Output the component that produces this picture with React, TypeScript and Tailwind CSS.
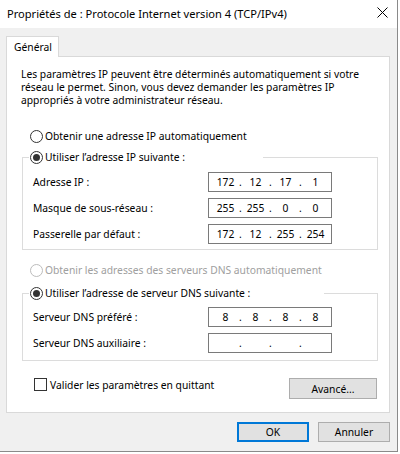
import type { ReactNode } from 'react';

type IpValue = [string, string, string, string];

function Radio({ checked, disabled }: { checked?: boolean; disabled?: boolean }) {
  return (
    <span
      className={`w-[13px] h-[13px] shrink-0 rounded-full border bg-white flex items-center justify-center ${
        disabled ? 'border-[#bcbcbc]' : 'border-[#333333]'
      }`}
    >
      {checked && <span className="w-[7px] h-[7px] rounded-full bg-[#333333]" />}
    </span>
  );
}

function RadioLine({ checked, disabled, children }: { checked?: boolean; disabled?: boolean; children: ReactNode }) {
  return (
    <div className={`h-[16px] flex items-center gap-[2px] ${disabled ? 'text-[#a0a0a0]' : ''}`}>
      <Radio checked={checked} disabled={disabled} />
      <span className="whitespace-nowrap">{children}</span>
    </div>
  );
}

function IpBox({ value }: { value: IpValue }) {
  return (
    <div className="w-[124px] h-[20px] border border-[#7a7a7a] bg-white flex items-center pl-[3px]">
      {value.map((part, i) => (
        <div key={i} className="flex items-center">
          {i > 0 && <span className="w-[3px] text-center">.</span>}
          <span className="w-[27px] text-center">{part}</span>
        </div>
      ))}
    </div>
  );
}

function Row({ label, value }: { label: string; value: IpValue }) {
  return (
    <div className="h-[20px] flex items-center">
      <span className="w-[175px]">{label}</span>
      <IpBox value={value} />
    </div>
  );
}

function Group({ legend, legendWidth, children }: { legend: ReactNode; legendWidth: string; children: ReactNode }) {
  return (
    <fieldset className="ml-[15px] w-[356px] border border-[#dcdcdc] p-0">
      <legend className={`ml-[6px] pl-[1px] ${legendWidth}`}>{legend}</legend>
      {children}
    </fieldset>
  );
}

function WinButton({ children, primary }: { children: ReactNode; primary?: boolean }) {
  return (
    <button
      className={`w-[72px] h-[20px] bg-[#e1e1e1] flex items-center justify-center ${
        primary ? 'border-2 border-[#0078d7]' : 'border border-[#adadad]'
      }`}
    >
      {children}
    </button>
  );
}

export default function App() {
  return (
    <div className="w-[400px] h-[454px] bg-white text-[10.3px] leading-[16px] text-black font-['Segoe_UI','Noto_Sans',sans-serif]">
      <div className="w-[398px] h-[452px] bg-[#f0f0f0] border-r border-b border-[#8a8a8a] flex flex-col">
        {/* Title bar */}
        <div className="h-[28px] shrink-0 bg-white flex items-center justify-between pl-[7px] pr-[9px]">
          <span className="whitespace-nowrap text-[11.1px]">Propriétés de : Protocole Internet version 4 (TCP/IPv4)</span>
          <svg width="11" height="11" viewBox="0 0 11 11" className="mb-[3px]">
            <path d="M0.5 0.5 L10.5 10.5 M10.5 0.5 L0.5 10.5" stroke="#000" strokeWidth="1" fill="none" />
          </svg>
        </div>

        <div className="pl-[6px] pr-[7px] pt-[8px]">
          {/* Tab */}
          <div className="flex">
            <div className="relative z-10 -mb-px h-[21px] w-[53px] bg-white border border-b-0 border-[#d9d9d9] pl-[7px] flex items-center">
              Général
            </div>
          </div>

          {/* Tab panel */}
          <div className="h-[357px] bg-white border border-[#d9d9d9] flex flex-col">
            <p className="mt-[11px] ml-[14px] leading-[13px] whitespace-nowrap">
              Les paramètres IP peuvent être déterminés automatiquement si votre
              <br />
              réseau le permet. Sinon, vous devez demander les paramètres IP
              <br />
              appropriés à votre administrateur réseau.
            </p>

            <div className="mt-[21px] ml-[23px]">
              <RadioLine>Obtenir une adresse IP automatiquement</RadioLine>
            </div>

            <div className="mt-[5px]">
              <Group legend={<RadioLine checked>Utiliser l’adresse IP suivante :</RadioLine>} legendWidth="w-[234px]">
                <div className="pl-[10px] pt-[7px] pb-[5px] flex flex-col gap-[6px]">
                  <Row label="Adresse IP :" value={['172', '12', '17', '1']} />
                  <Row label="Masque de sous-réseau :" value={['255', '255', '0', '0']} />
                  <Row label="Passerelle par défaut :" value={['172', '12', '255', '254']} />
                </div>
              </Group>
            </div>

            <div className="mt-[12px] ml-[23px]">
              <RadioLine disabled>Obtenir les adresses des serveurs DNS automatiquement</RadioLine>
            </div>

            <div className="mt-[7px]">
              <Group
                legend={<RadioLine checked>Utiliser l’adresse de serveur DNS suivante :</RadioLine>}
                legendWidth="w-[295px]"
              >
                <div className="pl-[10px] pt-[6px] pb-[7px] flex flex-col gap-[6px]">
                  <Row label="Serveur DNS préféré :" value={['8', '8', '8', '8']} />
                  <Row label="Serveur DNS auxiliaire :" value={['', '', '', '']} />
                </div>
              </Group>
            </div>

            <div className="mt-[17px] flex items-start justify-between">
              <div className="ml-[27px] h-[13px] flex items-center gap-[3px]">
                <span className="w-[13px] h-[13px] border border-[#333333] bg-white" />
                <span className="whitespace-nowrap">Valider les paramètres en quittant</span>
              </div>
              <button className="mr-[12px] w-[88px] h-[21px] bg-[#e1e1e1] border border-[#adadad] flex items-center justify-center">
                Avancé...
              </button>
            </div>
          </div>

          {/* Dialog buttons */}
          <div className="mt-[9px] flex justify-end gap-[9px]">
            <WinButton primary>OK</WinButton>
            <WinButton>Annuler</WinButton>
          </div>
        </div>
      </div>
    </div>
  );
}
